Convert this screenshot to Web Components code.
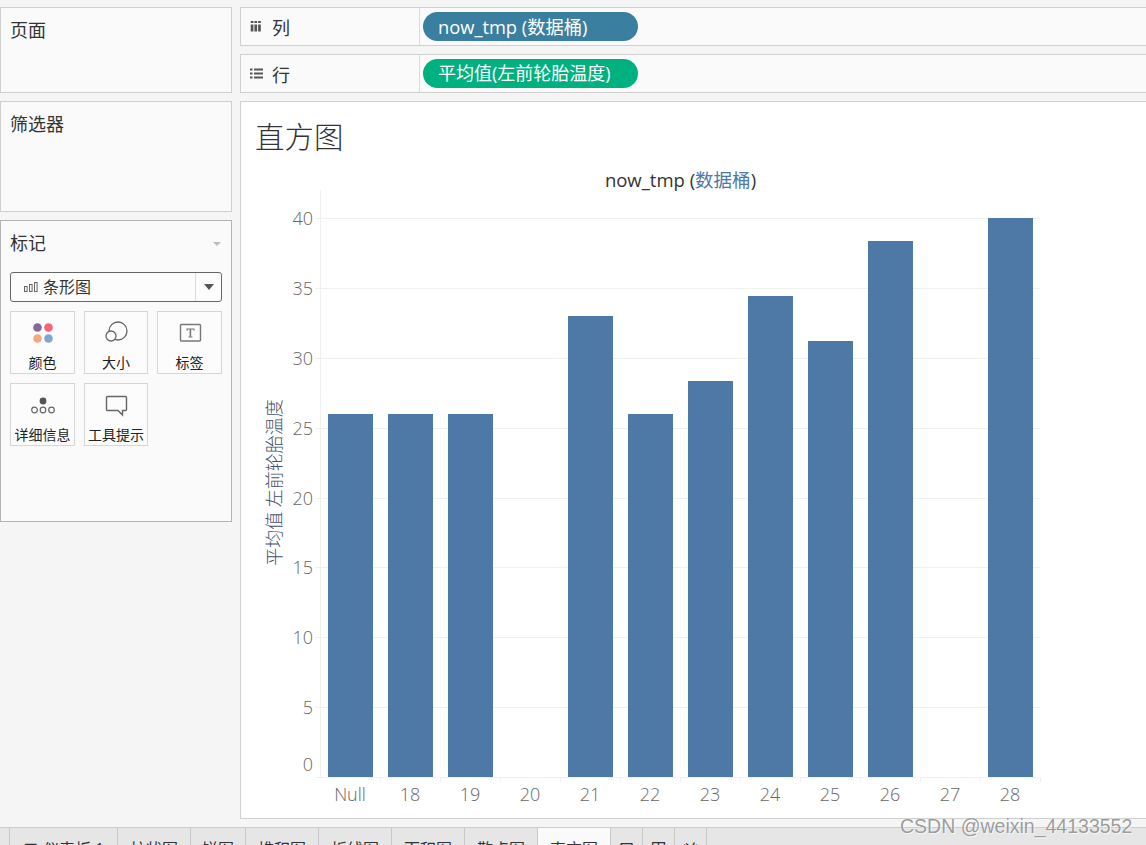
<!DOCTYPE html>
<html lang="zh">
<head>
<meta charset="utf-8">
<title>直方图</title>
<style>
html, body { margin: 0; height: 845px; overflow: hidden; background: #f5f5f5; }
body { font-family: "Open Sans", "Noto Sans CJK SC", sans-serif; color: #333; }
</style>
</head>
<body>
<tb-app></tb-app>
<script>
function define(name, css, html, init) {
	const tpl = document.createElement('template');
	tpl.innerHTML = `<style>${css}</style>${html}`;
	customElements.define(name, class extends HTMLElement {
		constructor() {
			super();
			this.attachShadow({ mode: 'open' });
			this.shadowRoot.appendChild(tpl.content.cloneNode(true));
		}
		connectedCallback() {
			if (init) init.call(this, this.shadowRoot);
		}
	});
}

define('tb-panel', `
:host { display: block; box-sizing: border-box; background: #fafafa; border: 1px solid #d0d0d0; padding: 10px 9px 0; height: var(--h); }
:host([dark]) { border-color: #b3b3b3; }
.title { display: flex; align-items: center; justify-content: space-between; font-size: 18px; line-height: 25px; color: #333; }
.caret { display: none; margin-right: 1px; border: 4px solid transparent; border-top: 4px solid #bbb; border-bottom: 0; }
:host([dark]) .caret { display: block; }
`, `<div class="title"><slot name="title"></slot><i class="caret"></i></div><slot></slot>`);

define('tb-pill', `
:host { display: block; width: 215px; height: 29px; border-radius: 15px; background: var(--c); color: #fff; font-size: var(--fs); line-height: 29px; padding-left: 15px; box-sizing: border-box; white-space: nowrap; }
`, `<slot></slot>`);

define('tb-shelf', `
:host { display: flex; align-items: center; box-sizing: border-box; height: 39px; background: #fafafa; border: 1px solid #d0d0d0; border-right: 0; }
.label { display: flex; align-items: center; width: 179px; height: 100%; box-sizing: border-box; padding-left: 9px; gap: 9px; border-right: 1px solid #dcdcdc; font-size: 18px; color: #333; margin-right: 3px; }
`, `<div class="label"><slot name="icon"></slot><slot name="label"></slot></div><slot></slot>`);

define('mark-btn', `
:host { display: flex; flex-direction: column; align-items: center; box-sizing: border-box; height: 63px; background: #fcfcfc; border: 1px solid #d6d6d6; font-size: 14px; color: #222; white-space: nowrap; }
.icon { height: 41px; padding-top: 8px; box-sizing: border-box; }
.text { line-height: 20px; }
`, `<div class="icon"><slot name="icon"></slot></div><div class="text"><slot></slot></div>`);

define('mark-select', `
:host { display: flex; align-items: center; box-sizing: border-box; height: 30px; border: 1px solid #666; border-radius: 3px; background: #fcfcfc; font-size: 16px; line-height: 26px; color: #333; margin-top: 16px; }
.val { flex: 1; display: flex; align-items: center; gap: 5px; padding-left: 13px; padding-bottom: 1px; }
.arrow { width: 25px; height: 28px; display: flex; align-items: center; justify-content: center; border-left: 1px solid #dcdcdc; }
.arrow i { border: 5px solid transparent; border-top: 6px solid #555; border-bottom: 0; }
`, `<div class="val">
<svg width="14" height="10" viewBox="0 0 14 10" fill="none" stroke="#666"><rect x=".5" y="4.5" width="2.6" height="5"/><rect x="5.5" y="2.5" width="2.6" height="7"/><rect x="10.5" y=".5" width="2.6" height="9"/></svg>
<slot></slot></div><div class="arrow"><i></i></div>`);

define('marks-card', `
:host { display: block; }
.grid { display: grid; grid-template-columns: 65px 64px 65px; column-gap: 9px; row-gap: 9px; margin-top: 9px; width: 212px; justify-content: space-between; }
`, `<mark-select>条形图</mark-select>
<div class="grid">
<mark-btn><svg slot="icon" width="26" height="26" viewBox="0 0 26 26"><circle cx="7.5" cy="7.5" r="4.3" fill="#85689a"/><circle cx="18.5" cy="7.5" r="4.3" fill="#f4627c"/><circle cx="7.5" cy="18.5" r="4.3" fill="#f3a97d"/><circle cx="18.5" cy="18.5" r="4.3" fill="#7fa5d1"/></svg>颜色</mark-btn>
<mark-btn><svg slot="icon" width="26" height="26" viewBox="0 0 26 26" fill="none" stroke="#666" stroke-width="1.3"><circle cx="15" cy="11" r="9"/><circle cx="8" cy="16" r="5" fill="#fcfcfc"/></svg>大小</mark-btn>
<mark-btn><svg slot="icon" width="26" height="26" viewBox="0 0 26 26"><rect x="3.5" y="4.5" width="20" height="16.5" rx="1" fill="none" stroke="#777" stroke-width="1.4"/><path d="M9.5 8.5h8v2.2h-.8l-.4-1.1h-2.1v7h1.2v.9h-4v-.9h1.2v-7H10.700l-.4 1.100h-.8z" fill="#777"/></svg>标签</mark-btn>
<mark-btn><svg slot="icon" width="26" height="26" viewBox="0 0 26 26" fill="none" stroke="#666" stroke-width="1.2"><circle cx="13" cy="9" r="3.4" fill="#555" stroke="none"/><circle cx="4.500" cy="18" r="2.800"/><circle cx="13" cy="18" r="2.800"/><circle cx="21.500" cy="18" r="2.800"/></svg>详细信息</mark-btn>
<mark-btn><svg slot="icon" width="26" height="26" viewBox="0 0 26 26" fill="none" stroke="#666" stroke-width="1.400"><path d="M4.500 4.500h18q1 0 1 1v12q0 1-1 1h-3v4.500l-4.500-4.500h-10.500q-1 0-1-1v-12q0-1 1-1z"/></svg>工具提示</mark-btn>
</div>`);

const bars = [['Null', 26], ['18', 26], ['19', 26], ['20', 0], ['21', 33], ['22', 26], ['23', 28.350], ['24', 34.400], ['25', 31.200], ['26', 38.350], ['27', 0], ['28', 40]];

define('tb-chart', `
:host { display: block; height: 650px; }
svg { display: block; }
text { font-family: "Open Sans", "Noto Sans CJK SC", sans-serif; }
.tick { font-size: 18px; font-weight: 300; fill: #666; }
`, `<svg id="c" width="905" height="650" viewBox="241 165 905 650"></svg>`, function (root) {
	const y0 = 777, perFive = 69.875;
	let s = `<path d="M320.500 190V777" stroke="#f0f0f0"/>`;
	for (let v = 0; v <= 40; v += 5) {
		const y = Math.round(y0 - v / 5 * perFive) + .5;
		s += `<path d="M315 ${y}H1040" stroke="#f0f0f0"/>`;
		const ly = v ? y + 6 : y - 7;
		s += `<text class="tick" x="313" y="${ly}" text-anchor="end">${v}</text>`;
	}
	bars.forEach(([name, v], i) => {
		const x = 328 + i * 60;
		const h = Math.round(v / 5 * perFive);
		if (v) s += `<rect x="${x}" y="${y0 - h}" width="45" height="${h}" fill="#4e79a7"/>`;
		s += `<path d="M${380.500 + i * 60} 777v5" stroke="#f0f0f0"/>`;
		s += `<text class="tick" x="${350 + i * 60}" y="801" text-anchor="middle">${name}</text>`;
	});
	s += `<text x="680.500" y="187" text-anchor="middle" font-size="18.500" fill="#333">now_tmp (<tspan fill="#4e79a7">数据桶</tspan>)</text>`;
	s += `<text transform="translate(281 482.500) rotate(-90)" text-anchor="middle" font-size="18" font-weight="300" fill="#3f4f6e" xml:space="preserve">平均值 左前轮胎温度</text>`;
	root.getElementById('c').innerHTML = s;
});

define('tb-view', `
:host { display: block; box-sizing: border-box; height: 718px; background: #fff; border: 1px solid #d0d0d0; border-right: 0; }
.title { font-size: 29.500px; line-height: 40px; padding: 15px 0 0 14px; margin-bottom: 8px; color: #333; font-weight: 300; }
`, `<div class="title"><slot name="title"></slot></div><slot></slot>`);

define('tb-tab', `
:host { display: block; box-sizing: border-box; width: var(--w); height: 100%; border-right: 1px solid #c8c8c8; background: #e6e6e6; font-size: 16px; line-height: 22px; padding-top: 10px; text-align: center; color: #333; white-space: nowrap; overflow: hidden; }
:host([active]) { background: #fafafa; }
`, `<slot></slot>`);

define('tb-tabs', `
:host { display: flex; height: 18px; box-sizing: border-box; border-top: 1px solid #ccc; background: #e6e6e6; }
`, `<tb-tab style="--w:10px"></tb-tab>
<tb-tab style="--w:108px">二 仪表板 1</tb-tab>
<tb-tab style="--w:73px">柱状图</tb-tab>
<tb-tab style="--w:55px">饼图</tb-tab>
<tb-tab style="--w:73px">堆积图</tb-tab>
<tb-tab style="--w:73px">折线图</tb-tab>
<tb-tab style="--w:73px">面积图</tb-tab>
<tb-tab style="--w:73px">散点图</tb-tab>
<tb-tab style="--w:73px" active>直方图</tb-tab>
<tb-tab style="--w:32px">口</tb-tab>
<tb-tab style="--w:32px">田</tb-tab>
<tb-tab style="--w:32px">凶</tb-tab>`);

define('tb-watermark', `
:host { position: absolute; left: 900px; top: 814px; font: 19.500px/24px "Liberation Sans", sans-serif; color: rgba(90,90,90,.62); text-shadow: 0 0 1px #fff, 1px 1px 1px rgba(255,255,255,.7); white-space: nowrap; }
`, `<slot></slot>`);

define('tb-app', `
:host { display: block; position: relative; height: 845px; overflow: hidden; }
.main { display: grid; grid-template-columns: 232px 906px; column-gap: 8px; padding-top: 7px; height: 827px; box-sizing: border-box; }
.col { display: flex; flex-direction: column; gap: 8px; }
`, `<div class="main">
<div class="col">
<tb-panel style="--h:86px"><span slot="title">页面</span></tb-panel>
<tb-panel style="--h:111px"><span slot="title">筛选器</span></tb-panel>
<tb-panel style="--h:302px" dark><span slot="title">标记</span><marks-card></marks-card></tb-panel>
</div>
<div class="col">
<tb-shelf><svg slot="icon" width="13" height="13" viewBox="0 0 13 13" fill="#555"><path d="M.7 1h2.700v2H.7zM.7 4.500h2.700V11.500H.7zM4.400 1h2.700v2H4.400zM4.400 4.500h2.700V11.500H4.400zM8.100 1h2.700v2H8.100zM8.100 4.500h2.700V11.500H8.100z"/></svg><span slot="label">列</span><tb-pill style="--c:#3a7f9f;--fs:18.300px">now_tmp (数据桶)</tb-pill></tb-shelf>
<tb-shelf><svg slot="icon" width="13" height="13" viewBox="0 0 13 13" fill="#555"><path d="M0 1.500h2.500v2H0zM4 1.500h9v2H4zM0 5.500h2.500v2H0zM4 5.500h9v2H4zM0 9.500h2.500v2H0zM4 9.500h9v2H4z"/></svg><span slot="label">行</span><tb-pill style="--c:#00b180;--fs:18px">平均值(左前轮胎温度)</tb-pill></tb-shelf>
<tb-view><span slot="title">直方图</span><tb-chart></tb-chart></tb-view>
</div>
</div>
<tb-tabs></tb-tabs>
<tb-watermark>CSDN @weixin_44133552</tb-watermark>`);
</script>
</body>
</html>
